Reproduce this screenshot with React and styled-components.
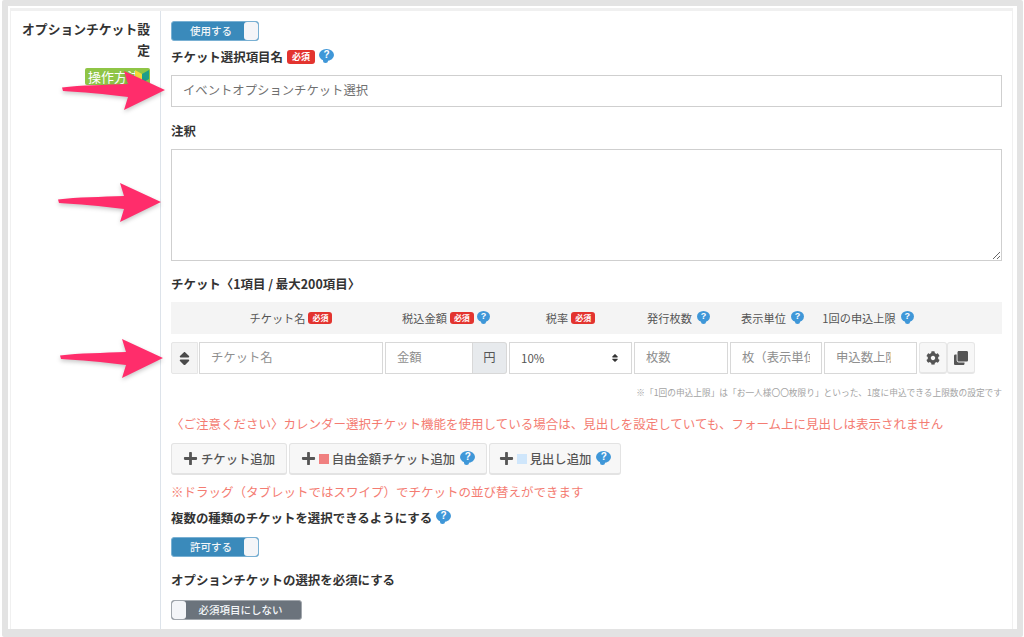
import React from "react";
import styled, { createGlobalStyle } from "styled-components";
import { FaCog, FaClone, FaPlus, FaSort } from "react-icons/fa";

const GlobalStyle = createGlobalStyle`
  html, body {
    margin: 0;
    padding: 0;
    background: #fff;
    font-family: "Noto Sans CJK JP", "Noto Sans", "Liberation Sans", sans-serif;
    color: #333;
  }
`;

const Page = styled.div`
  position: relative;
  width: 1024px;
  height: 637px;
  box-sizing: border-box;
  padding: 0 1px 0 2px;
  overflow: hidden;
`;

const Frame = styled.div`
  height: 637px;
  box-sizing: border-box;
  border: 6px solid #e3e3e3;
  border-bottom-width: 8px;
  border-radius: 2px;
  padding: 2px 4px 0 2px;
`;

const Panel = styled.div`
  height: 100%;
  box-sizing: border-box;
  border-top: 3px solid #f0f0f0;
  border-left: 1px solid #f0f0f0;
  border-right: 1px solid #f0f0f0;
  display: grid;
  grid-template-columns: 150px 1fr;
`;

const Side = styled.div`
  border-right: 1px solid #dde3ea;
  padding: 7px 10px 0 8px;
  text-align: right;
`;

const SideTitle = styled.div`
  font-size: 12.8px;
  line-height: 21px;
  font-weight: 700;
  color: #333;
`;

const HowTo = styled.a`
  display: inline-flex;
  align-items: flex-start;
  margin-top: 8px;
  width: 65px;
  height: 17px;
  box-sizing: border-box;
  padding: 0 2px 0 3px;
  background: #8fc546;
  border-radius: 2px;
  color: #fff;
  font-size: 13px;
  line-height: 17px;
  white-space: nowrap;
  overflow: hidden;
`;

const BeginnerMark = styled.svg`
  flex: none;
  width: 14px;
  height: 13px;
  margin: 2px 0 0 -5px;
`;

const Content = styled.div`
  padding: 10px 10px 0 10px;
  display: flex;
  flex-direction: column;
  align-items: stretch;
`;

const ToggleBox = styled.div`
  display: flex;
  flex-direction: ${(p) => (p.$on ? "row" : "row-reverse")};
  align-items: stretch;
  width: ${(p) => p.$width}px;
  height: 20px;
  box-sizing: border-box;
  border: 1px solid ${(p) => (p.$on ? "#79b0d3" : "#a2a7ad")};
  border-radius: 3px;
  background: ${(p) => (p.$on ? "#3a8abb" : "#6b737c")};
  overflow: hidden;
`;

const ToggleText = styled.span`
  flex: 1;
  box-sizing: border-box;
  padding: ${(p) => (p.$on ? "0 0 0 6px" : "0 6px 0 0")};
  text-align: center;
  color: #f3f6f8;
  font-size: 10.5px;
  line-height: 18px;
  font-weight: 500;
`;

const ToggleKnob = styled.span`
  width: 14px;
  background: #f4f5f8;
  border-radius: 3px;
`;

const Label = styled.div`
  display: flex;
  align-items: center;
  gap: 4px;
  margin-top: ${(p) => p.$top}px;
  font-size: 12.45px;
  line-height: 18px;
  font-weight: 700;
  color: #333;
`;

const Required = styled.span`
  display: inline-block;
  width: ${(p) => (p.$small ? 24 : 28)}px;
  height: ${(p) => (p.$small ? 12 : 14)}px;
  border-radius: 3px;
  background: #e3342f;
  color: #fff;
  text-align: center;
  font-size: ${(p) => (p.$small ? 8 : 9)}px;
  line-height: ${(p) => (p.$small ? 12 : 14)}px;
  font-weight: 700;
`;

const Help = styled.span`
  position: relative;
  display: inline-block;
  flex: none;
  width: ${(p) => (p.$small ? 13 : 15)}px;
  height: ${(p) => (p.$small ? 11 : 12)}px;
  margin-top: -4px;
  border-radius: 50%;
  background: #3f97d8;
  color: #fff;
  text-align: center;
  font-family: "Liberation Sans", sans-serif;
  font-size: ${(p) => (p.$small ? 9 : 10)}px;
  line-height: ${(p) => (p.$small ? 11 : 12)}px;
  font-weight: 700;

  &::after {
    content: "";
    position: absolute;
    left: 4px;
    bottom: -2px;
    width: 5px;
    height: 4px;
    background: #3f97d8;
    border-radius: 0 0 3px 3px;
  }
`;

const TextInput = styled.div`
  margin-top: 9px;
  height: 32px;
  box-sizing: border-box;
  border: 1px solid #cfcfcf;
  padding: 0 11px;
  font-size: 12.35px;
  line-height: 29px;
  color: #707070;
`;

const TextArea = styled.textarea`
  display: block;
  margin-top: 9px;
  height: 112px;
  box-sizing: border-box;
  border: 1px solid #cfcfcf;
  border-radius: 0;
  outline: none;
  padding: 0;
`;

const columns = "27px 1px 184px 2px 122px 2px 123px 2px 94px 2px 92px 2px 93px 2px 28px 28px 1fr";

const HeadRow = styled.div`
  display: grid;
  grid-template-columns: ${columns};
  margin-top: 9px;
  height: 32px;
  align-items: center;
  background: #f4f4f4;
`;

const HeadCell = styled.div`
  grid-column: ${(p) => p.$col};
  display: flex;
  justify-content: center;
  align-items: center;
  gap: ${(p) => p.$gap || 3}px;
  padding-right: ${(p) => p.$shift || 0}px;
  font-size: 11.2px;
  line-height: 14px;
  color: #555;
  white-space: nowrap;
`;

const TicketRow = styled.div`
  display: grid;
  grid-template-columns: ${columns};
  margin-top: 8px;
  height: 32px;
`;

const Grip = styled.div`
  grid-column: 1;
  display: flex;
  align-items: center;
  justify-content: center;
  background: #f4f4f4;
  border: 1px solid #e6e6e6;
  border-radius: 2px 0 0 2px;
  color: #4a4a4a;
  font-size: 17px;
`;

const Field = styled.div`
  grid-column: ${(p) => p.$col};
  box-sizing: border-box;
  border: 1px solid #d8d8d8;
  padding: 0 ${(p) => p.$right || 11}px 0 11px;
  font-size: 12.35px;
  line-height: 28px;
  color: #8f8f8f;
`;

const FieldText = styled.span`
  display: block;
  white-space: nowrap;
  overflow: hidden;
`;

const AddonGroup = styled.div`
  grid-column: 5;
  display: grid;
  grid-template-columns: 1fr 34px;
`;

const Addon = styled.div`
  background: #e7eaed;
  border: 1px solid #d8d8d8;
  border-left: 0;
  border-radius: 0 3px 3px 0;
  text-align: center;
  font-size: 12.35px;
  line-height: 28px;
  color: #555;
`;

const SelectBox = styled.div`
  grid-column: 7;
  display: flex;
  align-items: center;
  justify-content: space-between;
  box-sizing: border-box;
  border: 1px solid #d8d8d8;
  padding: 0 11px;
  font-size: 11.5px;
  color: #555;
`;

const SelectCaret = styled(FaSort)`
  font-size: 10px;
  color: #333;
`;

const IconButton = styled.div`
  grid-column: ${(p) => p.$col};
  display: flex;
  align-items: center;
  justify-content: center;
  background: #f7f7f7;
  border: 1px solid #e6e6e6;
  border-bottom-width: 2px;
  border-radius: 3px;
  font-size: 14px;
  color: #555;
`;

const Note = styled.div`
  margin-top: 13px;
  text-align: right;
  font-size: 8.7px;
  line-height: 12px;
  color: #a3a3a3;
  white-space: nowrap;
`;

const Warning = styled.div`
  margin-top: ${(p) => p.$top}px;
  font-size: 12.5px;
  line-height: 18px;
  color: #f47c72;
  white-space: nowrap;
`;

const ButtonRow = styled.div`
  display: flex;
  gap: 2px;
  margin-top: 10px;
`;

const AddButton = styled.div`
  display: flex;
  align-items: center;
  gap: 3px;
  height: 32px;
  width: ${(p) => p.$width}px;
  box-sizing: border-box;
  justify-content: center;
  background: #f7f7f7;
  border: 1px solid #e3e3e3;
  border-bottom-width: 2px;
  border-radius: 3px;
  font-size: 12.35px;
  font-weight: 500;
  color: #555;
  white-space: nowrap;

  ${Help} {
    margin-left: 2px;
  }
`;

const PlusIcon = styled(FaPlus)`
  font-size: 15px;
  color: #555;
`;

const Swatch = styled.span`
  display: inline-block;
  width: 10px;
  height: 10px;
  background: ${(p) => p.$color};
`;

const Spacer = styled.div`
  height: ${(p) => p.$size}px;
`;

const Arrow = styled.svg`
  position: absolute;
  left: ${(p) => p.$left}px;
  top: ${(p) => p.$top}px;
  width: 112px;
  height: 46px;
  overflow: visible;
  filter: drop-shadow(0 2px 2px rgba(0, 0, 0, 0.22));
`;

function PinkArrow({ left, top }) {
  return (
    <Arrow $left={left} $top={top} viewBox="0 0 112 46">
      <path d="M1 16.5 C20 14 44 14 67 13 L63 0 L104 19 L63 39 L67 26 C44 23 20 21 2 20 Z" fill="#ff2d6b" />
    </Arrow>
  );
}

function Toggle({ on, width, children }) {
  return (
    <ToggleBox $on={on} $width={width}>
      <ToggleText $on={on}>{children}</ToggleText>
      <ToggleKnob />
    </ToggleBox>
  );
}

export default function App() {
  return (
    <Page>
      <GlobalStyle />
      <Frame>
        <Panel>
          <Side>
            <SideTitle>オプションチケット設定</SideTitle>
            <HowTo>
              操作方法
              <BeginnerMark viewBox="0 0 14 13">
                <path d="M0 0 L7 4 V13 L0 9 Z" fill="#f4d93a" />
                <path d="M14 0 L7 4 V13 L14 9 Z" fill="#1f9e8a" />
              </BeginnerMark>
            </HowTo>
          </Side>
          <Content>
            <Toggle on width={88}>使用する</Toggle>
            <Label $top={7}>
              チケット選択項目名<Required>必須</Required><Help>?</Help>
            </Label>
            <TextInput>イベントオプションチケット選択</TextInput>
            <Label $top={15}>注釈</Label>
            <TextArea />
            <Label $top={14}>チケット〈1項目 / 最大200項目〉</Label>
            <HeadRow>
              <HeadCell $col={3}>チケット名<Required $small>必須</Required></HeadCell>
              <HeadCell $col={5}>税込金額<Required $small>必須</Required><Help $small>?</Help></HeadCell>
              <HeadCell $col={7}>税率<Required $small>必須</Required></HeadCell>
              <HeadCell $col={9} $gap={5} $shift={5}>発行枚数<Help $small>?</Help></HeadCell>
              <HeadCell $col={11} $gap={5} $shift={7}>表示単位<Help $small>?</Help></HeadCell>
              <HeadCell $col={13} $gap={5} $shift={5}>1回の申込上限<Help $small>?</Help></HeadCell>
            </HeadRow>
            <TicketRow>
              <Grip><FaSort /></Grip>
              <Field $col={3}><FieldText>チケット名</FieldText></Field>
              <AddonGroup>
                <Field><FieldText>金額</FieldText></Field>
                <Addon>円</Addon>
              </AddonGroup>
              <SelectBox>10%<SelectCaret /></SelectBox>
              <Field $col={9}><FieldText>枚数</FieldText></Field>
              <Field $col={11}><FieldText>枚（表示単位）</FieldText></Field>
              <Field $col={13} $right={25}><FieldText>申込数上限</FieldText></Field>
              <IconButton $col={15}><FaCog /></IconButton>
              <IconButton $col={16}><FaClone /></IconButton>
            </TicketRow>
            <Note>※「1回の申込上限」は「お一人様〇〇枚限り」といった、1度に申込できる上限数の設定です</Note>
            <Warning $top={16}>〈ご注意ください〉カレンダー選択チケット機能を使用している場合は、見出しを設定していても、フォーム上に見出しは表示されません</Warning>
            <ButtonRow>
              <AddButton $width={116}><PlusIcon />チケット追加</AddButton>
              <AddButton $width={198}><PlusIcon /><Swatch $color="#f08080" />自由金額チケット追加<Help>?</Help></AddButton>
              <AddButton $width={132}><PlusIcon /><Swatch $color="#cfe6fb" />見出し追加<Help>?</Help></AddButton>
            </ButtonRow>
            <Warning $top={8}>※ドラッグ（タブレットではスワイプ）でチケットの並び替えができます</Warning>
            <Label $top={8}>複数の種類のチケットを選択できるようにする<Help>?</Help></Label>
            <Spacer $size={10} />
            <Toggle on width={88}>許可する</Toggle>
            <Label $top={14}>オプションチケットの選択を必須にする</Label>
            <Spacer $size={11} />
            <Toggle width={131}>必須項目にしない</Toggle>
          </Content>
        </Panel>
      </Frame>
      <PinkArrow left={61} top={71} />
      <PinkArrow left={57} top={183} />
      <PinkArrow left={59} top={339} />
    </Page>
  );
}
